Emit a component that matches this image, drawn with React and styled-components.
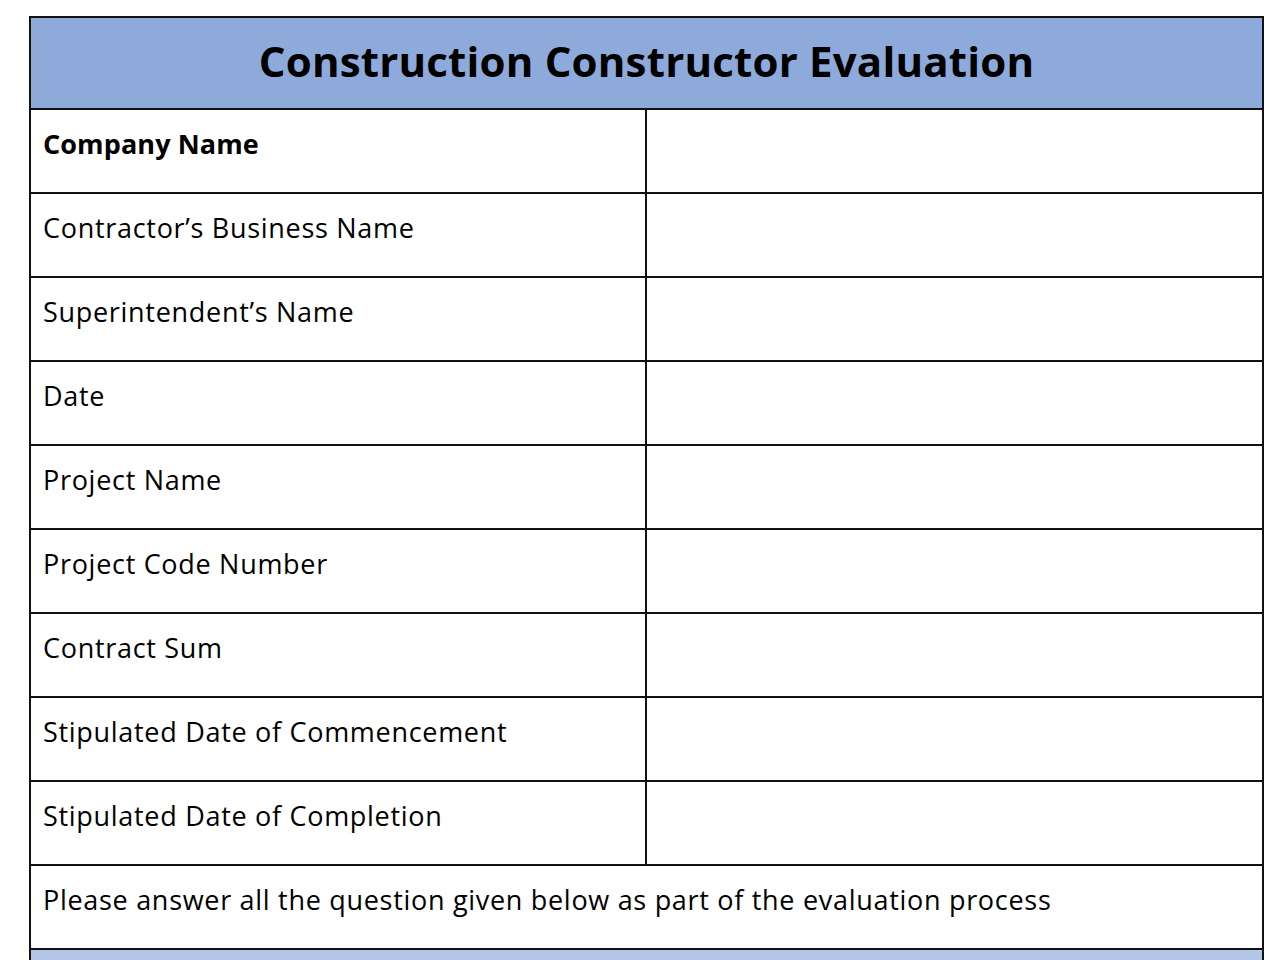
import React from 'react';
import styled, {createGlobalStyle} from 'styled-components';

const Global = createGlobalStyle`
    body {
        margin: 0;
        background: #ffffff;
        font-family: "Open Sans", Lato, sans-serif;
        color: #000000;
    }
`;

const Page = styled.div`
    width: 1280px;
    height: 960px;
    overflow: hidden;
    padding: 16px 0 0 29px;
    box-sizing: border-box;
`;

const Sheet = styled.div`
    width: 1235px;
    border: 2px solid #111;
    border-bottom: none;
    box-sizing: border-box;
`;

const Title = styled.div`
    height: 92px;
    background: #8eaadb;
    border-bottom: 2px solid #111;
    box-sizing: border-box;
    display: flex;
    align-items: center;
    justify-content: center;
    font-size: 42px;
    font-weight: 700;
    letter-spacing: 0.2px;
    padding-bottom: 6px;
`;

const Row = styled.div`
    display: grid;
    grid-template-columns: ${p => p.$full ? '1fr' : '616px 1fr'};
    height: 84px;
    border-bottom: 2px solid #111;
    box-sizing: border-box;
`;

const Cell = styled.div`
    padding: 14px 0 0 12px;
    font-size: 27px;
    line-height: 40px;
    letter-spacing: ${p => p.$bold ? '0.1px' : '0.7px'};
    font-weight: ${p => p.$bold ? 700 : 400};
    border-right: ${p => p.$divider ? '2px solid #111' : 'none'};
    white-space: nowrap;
`;

const Band = styled.div`
    height: 40px;
    background: #b4c6e7;
`;

const fields = [
    'Company Name',
    'Contractor’s Business Name',
    'Superintendent’s Name',
    'Date',
    'Project Name',
    'Project Code Number',
    'Contract Sum',
    'Stipulated Date of Commencement',
    'Stipulated Date of Completion',
];

export default function App() {
    return (
        <Page>
            <Global />
            <Sheet>
                <Title>Construction Constructor Evaluation</Title>
                {fields.map((f, i) => (
                    <Row key={f}>
                        <Cell $divider $bold={i === 0}>{f}</Cell>
                        <Cell />
                    </Row>
                ))}
                <Row $full>
                    <Cell>Please answer all the question given below as part of the evaluation process</Cell>
                </Row>
                <Band />
            </Sheet>
        </Page>
    );
}
